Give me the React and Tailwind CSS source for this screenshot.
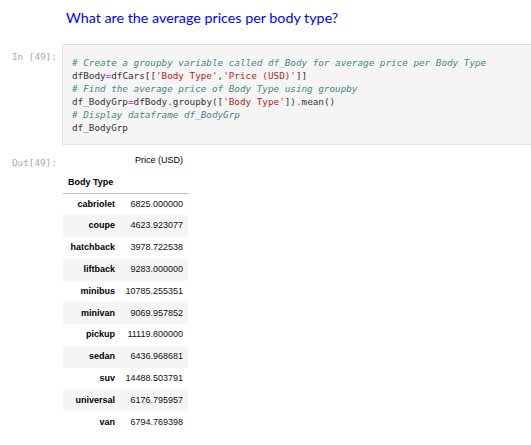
const ROWS = [
  ['cabriolet', '6825.000000'],
  ['coupe', '4623.923077'],
  ['hatchback', '3978.722538'],
  ['liftback', '9283.000000'],
  ['minibus', '10785.255351'],
  ['minivan', '9069.957852'],
  ['pickup', '11119.800000'],
  ['sedan', '6436.968681'],
  ['suv', '14488.503791'],
  ['universal', '6176.795957'],
  ['van', '6794.769398'],
];

const mono = { fontFamily: '"DejaVu Sans Mono", monospace' };

function C({ children }) {
  return <span className="italic text-[#4a8585]">{children}</span>;
}
function S({ children }) {
  return <span className="text-[#ba2121]">{children}</span>;
}
function O({ children }) {
  return <span className="text-[#aa22ff]">{children}</span>;
}

export default function App() {
  return (
    <div className="w-[531px] h-[445px] overflow-hidden bg-white font-['Open_Sans',sans-serif]">
      {/* Markdown cell */}
      <div className="pl-[66px] pt-[7px] h-[44px]">
        <h3 className="text-[14.3px] leading-[22px] text-[#0000ff] font-['Lato',sans-serif]">What are the average prices per body type?</h3>
      </div>

      {/* Code cell */}
      <div className="flex">
        <div className="w-[62px] pl-[12px] pt-[6px] text-[9.3px] text-[#a8a8a8]" style={mono}>In&nbsp;[49]:</div>
        <div className="flex-1 h-[101px] bg-[#f5f5f5] border border-[#e0e0e0] border-r-0 pl-[9px] pt-[11px] text-[9.3px] leading-[13px] text-[#333] whitespace-pre" style={mono}>
          <div><C># Create a groupby variable called df_Body for average price per Body Type</C></div>
          <div>dfBody<O>=</O>dfCars[[<S>'Body Type'</S>,<S>'Price (USD)'</S>]]</div>
          <div><C># Find the average price of Body Type using groupby</C></div>
          <div>df_BodyGrp<O>=</O>dfBody<O>.</O>groupby([<S>'Body Type'</S>])<O>.</O>mean()</div>
          <div><C># Display dataframe df_BodyGrp</C></div>
          <div>df_BodyGrp</div>
        </div>
      </div>

      {/* Output */}
      <div className="flex pt-[5px]">
        <div className="w-[63px] pl-[12px] pt-[6px] text-[9.3px] text-[#a8a8a8]" style={mono}>Out[49]:</div>
        <table className="border-collapse text-[9px] text-black font-['Liberation_Sans',sans-serif]">
          <thead>
            <tr className="h-[22px]">
              <th className="w-[57px]"></th>
              <th className="w-[68px] text-right pr-[5px] font-normal">Price (USD)</th>
            </tr>
            <tr className="h-[21.5px] border-b border-[#bdbdbd]">
              <th className="text-left pl-[5px] font-bold">Body Type</th>
              <th></th>
            </tr>
          </thead>
          <tbody>
            {ROWS.map(([name, val], i) => (
              <tr key={name} className={`h-[21.8px] ${i % 2 === 1 ? 'bg-[#f5f5f5]' : ''}`}>
                <th className="text-right pr-[5px] font-bold">{name}</th>
                <td className="text-right pr-[5px] text-[#111]">{val}</td>
              </tr>
            ))}
          </tbody>
        </table>
      </div>
    </div>
  );
}
